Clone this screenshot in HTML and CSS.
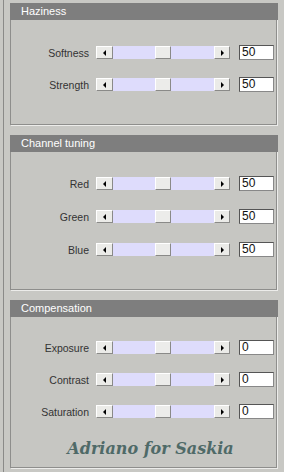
FILE: index.html
```html
<!DOCTYPE html>
<html lang="en">
<head>
    <meta charset="UTF-8">
    <title>Haziness</title>
    <link rel="stylesheet" href="styles.css">
</head>
<body>
    <div class="frame">
        <section class="panel first">
            <div class="panel-title">Haziness</div>
            <div class="panel-body">
                <div class="row">
                    <span class="label">Softness</span>
                    <div class="slider"><span class="btn left"></span><span class="track"><span class="thumb"></span></span><span class="btn right"></span></div>
                    <span class="value">50</span>
                </div>
                <div class="row">
                    <span class="label">Strength</span>
                    <div class="slider"><span class="btn left"></span><span class="track"><span class="thumb"></span></span><span class="btn right"></span></div>
                    <span class="value">50</span>
                </div>
            </div>
        </section>

        <section class="panel second">
            <div class="panel-title">Channel tuning</div>
            <div class="panel-body">
                <div class="row">
                    <span class="label">Red</span>
                    <div class="slider"><span class="btn left"></span><span class="track"><span class="thumb"></span></span><span class="btn right"></span></div>
                    <span class="value">50</span>
                </div>
                <div class="row">
                    <span class="label">Green</span>
                    <div class="slider"><span class="btn left"></span><span class="track"><span class="thumb"></span></span><span class="btn right"></span></div>
                    <span class="value">50</span>
                </div>
                <div class="row">
                    <span class="label">Blue</span>
                    <div class="slider"><span class="btn left"></span><span class="track"><span class="thumb"></span></span><span class="btn right"></span></div>
                    <span class="value">50</span>
                </div>
            </div>
        </section>

        <section class="panel third">
            <div class="panel-title">Compensation</div>
            <div class="panel-body">
                <div class="row">
                    <span class="label">Exposure</span>
                    <div class="slider"><span class="btn left"></span><span class="track"><span class="thumb"></span></span><span class="btn right"></span></div>
                    <span class="value">0</span>
                </div>
                <div class="row">
                    <span class="label">Contrast</span>
                    <div class="slider"><span class="btn left"></span><span class="track"><span class="thumb"></span></span><span class="btn right"></span></div>
                    <span class="value">0</span>
                </div>
                <div class="row">
                    <span class="label">Saturation</span>
                    <div class="slider"><span class="btn left"></span><span class="track"><span class="thumb"></span></span><span class="btn right"></span></div>
                    <span class="value">0</span>
                </div>
                <div class="signature">Adriano for Saskia</div>
            </div>
        </section>
    </div>
</body>
</html>
```

FILE: styles.css
```css
body {
    margin: 0;
    width: 284px;
    height: 472px;
    overflow: hidden;
    background-color: #c8c8c4;
    font-family: 'Liberation Sans', Arial, sans-serif;
    font-size: 10.5px;
    color: #333;
}
.frame {
    margin-left: 3px;
    height: 472px;
    border-left: 1px solid #8a8a88;
    padding: 3px 0 0 6px;
    box-sizing: border-box;
}
.panel {
    width: 267px;
    border: 1px solid #8e8e8c;
    box-shadow: 1px 1px 0 #ececea;
    background-color: #c6c6c2;
    box-sizing: border-box;
    margin-bottom: 10px;
}
.panel-title {
    height: 17px;
    line-height: 16px;
    margin: -1px -2px 0 -1px;
    padding-left: 11px;
    background-color: #7e7e7e;
    color: #fff;
    font-size: 11px;
}
.panel-body {
    display: flex;
    flex-direction: column;
    gap: 19px;
    padding: 26px 0 33px 0;
}
.second .panel-body {
    gap: 20px;
    padding: 25px 0 33px 0;
}
.third .panel-body {
    gap: 19px;
    padding: 24px 0 0 0;
}
.row {
    display: flex;
    align-items: center;
    height: 13px;
}
.label {
    width: 78px;
    text-align: right;
    margin-right: 7px;
}
.slider {
    display: flex;
    height: 13px;
}
.btn {
    position: relative;
    width: 17px;
    height: 13px;
    box-sizing: border-box;
    background-color: #ebebe8;
    border-top: 1px solid #fff;
    border-left: 1px solid #fff;
    border-right: 1px solid #8a8a88;
    border-bottom: 1px solid #8a8a88;
}
.btn.right {
    width: 16px;
}
.btn::after {
    content: '';
    position: absolute;
    top: 3px;
    left: 6px;
    border-top: 3px solid transparent;
    border-bottom: 3px solid transparent;
}
.btn.left::after {
    border-right: 3px solid #000;
}
.btn.right::after {
    border-left: 3px solid #000;
}
.track {
    position: relative;
    width: 101px;
    height: 13px;
    background-color: #dedcfc;
}
.thumb {
    position: absolute;
    left: 42px;
    top: 0;
    width: 16px;
    height: 13px;
    box-sizing: border-box;
    background-color: #ececea;
    border-top: 1px solid #fff;
    border-left: 1px solid #fff;
    border-right: 1px solid #8a8a88;
    border-bottom: 1px solid #8a8a88;
}
.value {
    width: 35px;
    height: 15px;
    margin-left: 9px;
    box-sizing: border-box;
    background-color: #fff;
    border: 1px solid #555;
    border-right-color: #888;
    border-bottom-color: #888;
    padding-left: 2px;
    font-size: 12px;
    line-height: 13px;
    color: #111;
}
.signature {
    margin-top: 2px;
    height: 28px;
    line-height: 20px;
    text-align: center;
    font-family: 'DejaVu Serif', serif;
    font-style: italic;
    font-weight: bold;
    font-size: 16px;
    color: #4f6a68;
    padding-left: 14px;
}
```
